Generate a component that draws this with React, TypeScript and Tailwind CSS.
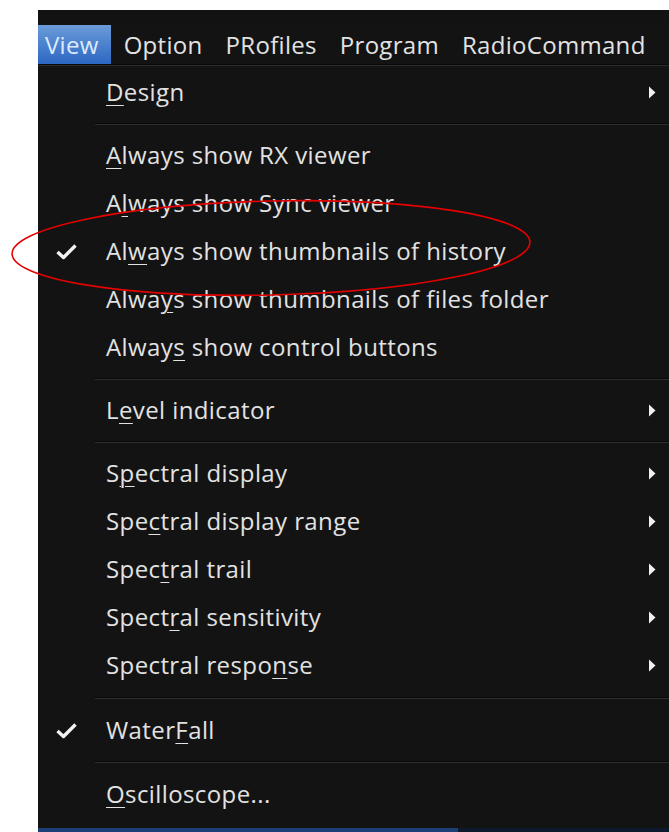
import React from "react";

type Item =
  | { kind: "sep"; h: string }
  | { kind: "item"; pre: string; key: string; post: string; checked?: boolean; sub?: boolean };

const ITEMS: Item[] = [
  { kind: "item", pre: "", key: "D", post: "esign", sub: true },
  { kind: "sep", h: "h-[15px]" },
  { kind: "item", pre: "", key: "A", post: "lways show RX viewer" },
  { kind: "item", pre: "A", key: "l", post: "ways show Sync viewer" },
  { kind: "item", pre: "Al", key: "w", post: "ays show thumbnails of history", checked: true },
  { kind: "item", pre: "Alwa", key: "y", post: "s show thumbnails of files folder" },
  { kind: "item", pre: "Alway", key: "s", post: " show control buttons" },
  { kind: "sep", h: "h-[15px]" },
  { kind: "item", pre: "L", key: "e", post: "vel indicator", sub: true },
  { kind: "sep", h: "h-[15px]" },
  { kind: "item", pre: "S", key: "p", post: "ectral display", sub: true },
  { kind: "item", pre: "Spe", key: "c", post: "tral display range", sub: true },
  { kind: "item", pre: "Spec", key: "t", post: "ral trail", sub: true },
  { kind: "item", pre: "Spect", key: "r", post: "al sensitivity", sub: true },
  { kind: "item", pre: "Spectral respo", key: "n", post: "se", sub: true },
  { kind: "sep", h: "h-[17px]" },
  { kind: "item", pre: "Water", key: "F", post: "all", checked: true },
  { kind: "sep", h: "h-[16px]" },
  { kind: "item", pre: "", key: "O", post: "scilloscope...", },
];

const MENUBAR = ["Option", "PRofiles", "Program", "RadioCommand", "Help"];

function Check() {
  return (
    <svg width="23" height="17" viewBox="0 0 23 17">
      <path d="M2.5 9 L8.5 14.5 L20.5 2.5" fill="none" stroke="#f2f2f2" strokeWidth="3.4" strokeLinejoin="round" />
    </svg>
  );
}

function Arrow() {
  return (
    <svg width="8" height="13" viewBox="0 0 8 13">
      <path d="M1 0.5 L7.5 6.5 L1 12.5 Z" fill="#f0f0f0" />
    </svg>
  );
}

export default function App() {
  return (
    <div className="relative h-[832px] w-[669px] overflow-hidden bg-white pt-[10px] pl-[38px]">
      <div className="flex h-full flex-col overflow-hidden bg-[#131313] font-['Open_Sans',sans-serif] text-[#e2e2e2]">
        {/* window strip above the menu bar */}
        <div className="h-[15px] bg-[#121212]" />

        {/* menu bar */}
        <div className="flex h-[39px] items-center whitespace-nowrap text-[24px] tracking-[0.3px]">
          <div className="flex h-full items-center bg-gradient-to-b from-[#6b9bd8] to-[#2c67c2] pl-[7px] pr-[12px] text-[#dcebff]">
            View
          </div>
          {MENUBAR.map((m, i) => (
            <div key={m} className={`${i === 0 ? "ml-[13px]" : "ml-[23px]"} flex h-full items-center`}>
              {m}
            </div>
          ))}
        </div>
        <div className="h-[2px] border-b border-[#2c2c2c] bg-[#0a0a0a]" />

        {/* dropdown */}
        <div className="flex flex-col pt-[2px] text-[24px] tracking-[0.4px]">
          {ITEMS.map((it, i) =>
            it.kind === "sep" ? (
              <div key={i} className={`flex ${it.h} items-center pl-[57px]`}>
                <div className="h-[2px] w-full border-b border-[#2f2f2f] bg-[#080808]" />
              </div>
            ) : (
              <div key={i} className="flex h-[48px] items-center whitespace-nowrap">
                <div className="flex w-[68px] pl-[17px]">{it.checked && <Check />}</div>
                <div className="flex-1">
                  {it.pre}
                  <span className="underline decoration-1 underline-offset-[4px]">{it.key}</span>
                  {it.post}
                </div>
                {it.sub && (
                  <div className="mr-[13px] flex items-center">
                    <Arrow />
                  </div>
                )}
              </div>
            )
          )}
        </div>

        <div className="flex-1" />
        <div className="flex h-[4px]">
          <div className="w-[420px] bg-[#1c3f78]" />
          <div className="flex-1 bg-[#0d1a2e]" />
        </div>
      </div>

      {/* red annotation ring */}
      <svg className="pointer-events-none absolute left-0 top-0" width="669" height="832">
        <ellipse cx="271" cy="248" rx="259" ry="47" transform="rotate(-1.3 271 248)" fill="none" stroke="#e30000" strokeWidth="1.6" />
      </svg>
    </div>
  );
}
